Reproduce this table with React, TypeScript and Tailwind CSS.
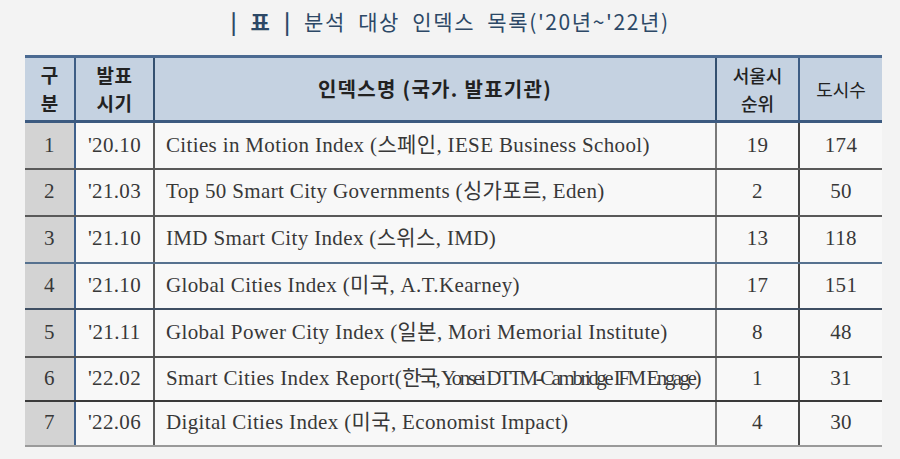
import type { ReactNode } from 'react'

const SERIF = 'font-["Liberation_Serif","Noto_Sans_CJK_KR",serif]'

interface Row {
  no: string
  date: string
  name: ReactNode
  rank: string
  cities: string
  height: string
  line: string
}

const ROWS: Row[] = [
  {
    no: '1',
    date: "'20.10",
    name: 'Cities in Motion Index (스페인, IESE Business School)',
    rank: '19',
    cities: '174',
    height: 'h-[47px]',
    line: 'border-b-[#595959]',
  },
  {
    no: '2',
    date: "'21.03",
    name: 'Top 50 Smart City Governments (싱가포르, Eden)',
    rank: '2',
    cities: '50',
    height: 'h-[47px]',
    line: 'border-b-[#595959]',
  },
  {
    no: '3',
    date: "'21.10",
    name: 'IMD Smart City Index (스위스, IMD)',
    rank: '13',
    cities: '118',
    height: 'h-[47px]',
    line: 'border-b-[#56718f]',
  },
  {
    no: '4',
    date: "'21.10",
    name: 'Global Cities Index (미국, A.T.Kearney)',
    rank: '17',
    cities: '151',
    height: 'h-[46px]',
    line: 'border-b-[#3f4f63]',
  },
  {
    no: '5',
    date: "'21.11",
    name: 'Global Power City Index (일본, Mori Memorial Institute)',
    rank: '8',
    cities: '48',
    height: 'h-[48px]',
    line: 'border-b-[#505050]',
  },
  {
    no: '6',
    date: "'22.02",
    name: (
      <>
        Smart Cities Index Report(
        <span className="tracking-[-2.5px]">한국, Yonsei DTTM-Cambridge IFM Engage)</span>
      </>
    ),
    rank: '1',
    cities: '31',
    height: 'h-[44px]',
    line: 'border-b-[#3a3a3a]',
  },
  {
    no: '7',
    date: "'22.06",
    name: 'Digital Cities Index (미국, Economist Impact)',
    rank: '4',
    cities: '30',
    height: 'h-[45px]',
    line: 'border-b-[#9a9a9a]',
  },
]

const HEAD =
  'bg-[#c5d2e1] border-t-[3px] border-t-[#4b6a91] border-b-[3px] border-b-[#3c5a80] text-[#222] font-["Noto_Sans_CJK_KR",sans-serif] leading-[28px]'

export default function App() {
  return (
    <div className="h-[459px] w-[900px] bg-[#f3f3f3] overflow-hidden">
      <div className="flex h-[55px] justify-center pt-[7px]">
        <h1 className='font-["Noto_Sans_CJK_KR",serif] text-[21px] leading-[28px] text-[#2c4866] tracking-[1.6px] [word-spacing:6px] whitespace-nowrap'>
          <span className="font-semibold">| 표 |</span> 분석 대상 인덱스 목록(&apos;20년~&apos;22년)
        </h1>
      </div>

      <div className="pl-[25px]">
        <table className="w-[857px] table-fixed border-collapse">
          <colgroup>
            <col className="w-[50px]" />
            <col className="w-[79px]" />
            <col className="w-[562px]" />
            <col className="w-[83px]" />
            <col className="w-[83px]" />
          </colgroup>
          <thead>
            <tr className="h-[65px]">
              <th className={`${HEAD} border-r-2 border-r-[#3e5d84] text-[19px] font-semibold`}>
                구<br />분
              </th>
              <th className={`${HEAD} border-r-2 border-r-[#34506f] text-[19px] font-semibold tracking-[0.5px]`}>
                발표<br />시기
              </th>
              <th className={`${HEAD} border-r-2 border-r-[#34506f] text-[20px] font-semibold tracking-[1.3px]`}>
                인덱스명 (국가. 발표기관)
              </th>
              <th className={`${HEAD} border-r-2 border-r-[#3e5d84] text-[18px] font-medium`}>
                서울시<br />순위
              </th>
              <th className={`${HEAD} text-[18px] font-normal`}>도시수</th>
            </tr>
          </thead>
          <tbody className={`${SERIF} text-[21px] tracking-[0.35px] text-[#383838]`}>
            {ROWS.map((r) => (
              <tr key={r.no} className={r.height}>
                <td className={`border-b-2 ${r.line} border-r-2 border-r-[#40618c] bg-[#d3d3d3] text-center`}>
                  {r.no}
                </td>
                <td className={`border-b-2 ${r.line} border-r-2 border-r-[#5a5a5a] bg-[#f8f8f8] text-center`}>
                  {r.date}
                </td>
                <td className={`border-b-2 ${r.line} border-r-2 border-r-[#7a7a7a] bg-[#f8f8f8] pl-[11px] whitespace-nowrap`}>
                  {r.name}
                </td>
                <td className={`border-b-2 ${r.line} border-r-2 border-r-[#454545] bg-[#f8f8f8] text-center`}>
                  {r.rank}
                </td>
                <td className={`border-b-2 ${r.line} bg-[#f8f8f8] text-center`}>{r.cities}</td>
              </tr>
            ))}
          </tbody>
        </table>
      </div>
    </div>
  )
}
